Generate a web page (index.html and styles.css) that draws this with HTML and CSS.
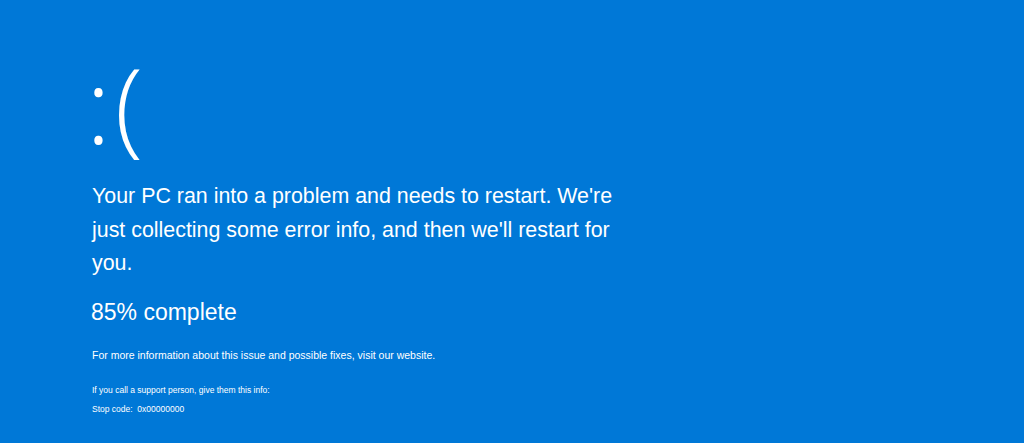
FILE: index.html
```html
<!DOCTYPE html>
<html lang="en">
<head>
    <meta charset="UTF-8">
    <meta name="viewport" content="width=device-width, initial-scale=1.0">
    <title>Your PC ran into a problem</title>
    <link rel="stylesheet" href="styles.css">
</head>
<body>
    <div class="screen">
        <div class="face">:(</div>

        <p class="message">Your PC ran into a problem and needs to restart. We're just collecting some error info, and then we'll restart for you.</p>

        <p class="progress">85% complete</p>

        <p class="more-info">For more information about this issue and possible fixes, visit our website.</p>

        <div class="support">
            <p>If you call a support person, give them this info:</p>
            <p>Stop code: &nbsp;0x00000000</p>
        </div>
    </div>
</body>
</html>
```

FILE: styles.css
```css
html, body {
    margin: 0;
    padding: 0;
    height: 100%;
}
body {
    background-color: #0078d7;
    color: #fff;
    font-family: "Liberation Sans", Arial, sans-serif;
    overflow: hidden;
}
.screen {
    padding: 49px 0 0 86px;
}
.face {
    font-family: "Open Sans", sans-serif;
    font-weight: 300;
    font-size: 104px;
    line-height: 110px;
    letter-spacing: 4px;
}
.message {
    width: 545px;
    margin: 21px 0 0 6px;
    font-size: 21.4px;
    line-height: 33.5px;
}
.progress {
    margin: 16px 0 0 5px;
    font-size: 23px;
    line-height: 30px;
}
.more-info {
    margin: 21px 0 0 6px;
    font-size: 10.5px;
    line-height: 14px;
}
.support {
    margin: 19px 0 0 6px;
    font-size: 8.5px;
    line-height: 19px;
}
.support p {
    margin: 0;
}
```
